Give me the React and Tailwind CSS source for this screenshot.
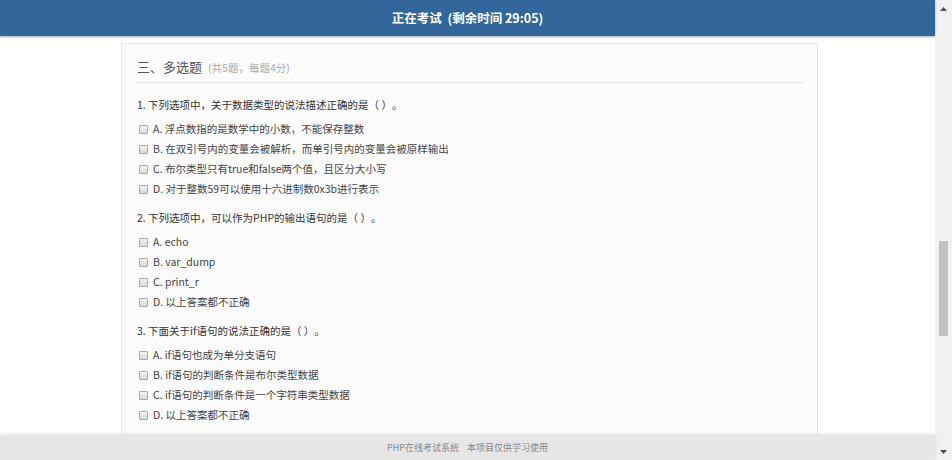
const questions = [
  {
    title: "1. 下列选项中，关于数据类型的说法描述正确的是（ ）。",
    options: [
      "A. 浮点数指的是数学中的小数，不能保存整数",
      "B. 在双引号内的变量会被解析，而单引号内的变量会被原样输出",
      "C. 布尔类型只有true和false两个值，且区分大小写",
      "D. 对于整数59可以使用十六进制数0x3b进行表示",
    ],
  },
  {
    title: "2. 下列选项中，可以作为PHP的输出语句的是（ ）。",
    options: ["A. echo", "B. var_dump", "C. print_r", "D. 以上答案都不正确"],
  },
  {
    title: "3. 下面关于if语句的说法正确的是（ ）。",
    options: [
      "A. if语句也成为单分支语句",
      "B. if语句的判断条件是布尔类型数据",
      "C. if语句的判断条件是一个字符串类型数据",
      "D. 以上答案都不正确",
    ],
  },
];

const Checkbox = () => (
  <span className="mr-[5px] inline-block h-[9px] w-[9px] shrink-0 rounded-[1px] border border-[#a9a9a9] bg-gradient-to-b from-[#f4f4f4] to-[#d9d9d9]" />
);

const App = () => {
  return (
    <div
      className="flex h-[460px] w-[952px] overflow-hidden bg-white text-[#333] [text-spacing-trim:space-all]"
      style={{ fontFamily: '"Noto Sans CJK SC", "Liberation Sans", sans-serif' }}
    >
      <div className="flex min-w-0 flex-1 flex-col">
        <header className="z-10 flex h-[36px] shrink-0 items-center justify-center bg-[#33669a] shadow-[0_1px_2px_rgba(0,0,0,0.35)]">
          <span className="text-[12.5px] font-bold leading-none text-white">
            正在考试&nbsp;&nbsp;(剩余时间 29:05)
          </span>
        </header>

        <main className="min-h-0 flex-1 overflow-hidden pt-[7px]">
          <section className="ml-[121px] w-[697px] border-x border-t border-[#e8e8e8] bg-[#fbfbfb] pl-[15px] pr-[13px] pt-[13px] pb-[40px]">
            <div className="flex items-baseline border-b border-[#e3e3e3] pb-[4px] leading-[20px]">
              <span className="text-[13px] text-[#555]">三、多选题</span>
              <span className="ml-[6px] text-[10.5px] text-[#aaa]">(共5题，每题4分)</span>
            </div>

            <div className="mt-[12px]">
              {questions.map((q) => (
                <div key={q.title} className="mb-[9px]">
                  <p className="text-[10.5px] leading-[20px] text-[#333]">{q.title}</p>
                  <ul className="mt-[4px]">
                    {q.options.map((opt) => (
                      <li key={opt} className="flex h-[20px] items-center pl-[2px] text-[10.5px] text-[#444]">
                        <Checkbox />
                        {opt}
                      </li>
                    ))}
                  </ul>
                </div>
              ))}
            </div>
          </section>
        </main>

        <footer className="z-10 flex h-[25px] shrink-0 items-center justify-center bg-[#e6e6e6] shadow-[0_-1px_3px_rgba(0,0,0,0.12)]">
          <span className="text-[9px] text-[#888]">PHP在线考试系统&nbsp;&nbsp;&nbsp;&nbsp;本项目仅供学习使用</span>
        </footer>
      </div>

      <div className="flex w-[17px] shrink-0 flex-col bg-[#f1f1f1]">
        <div className="flex h-[17px] items-center justify-center">
          <svg width="7" height="4" viewBox="0 0 7 4">
            <path d="M0 4 L3.5 0 L7 4 Z" fill="#505050" />
          </svg>
        </div>
        <div className="flex-1 pt-[224px]">
          <div className="mx-auto h-[95px] w-[9px] bg-[#c1c1c1]" />
        </div>
        <div className="flex h-[17px] items-center justify-center">
          <svg width="7" height="4" viewBox="0 0 7 4">
            <path d="M0 0 L3.5 4 L7 0 Z" fill="#505050" />
          </svg>
        </div>
      </div>
    </div>
  );
};

export default App;
